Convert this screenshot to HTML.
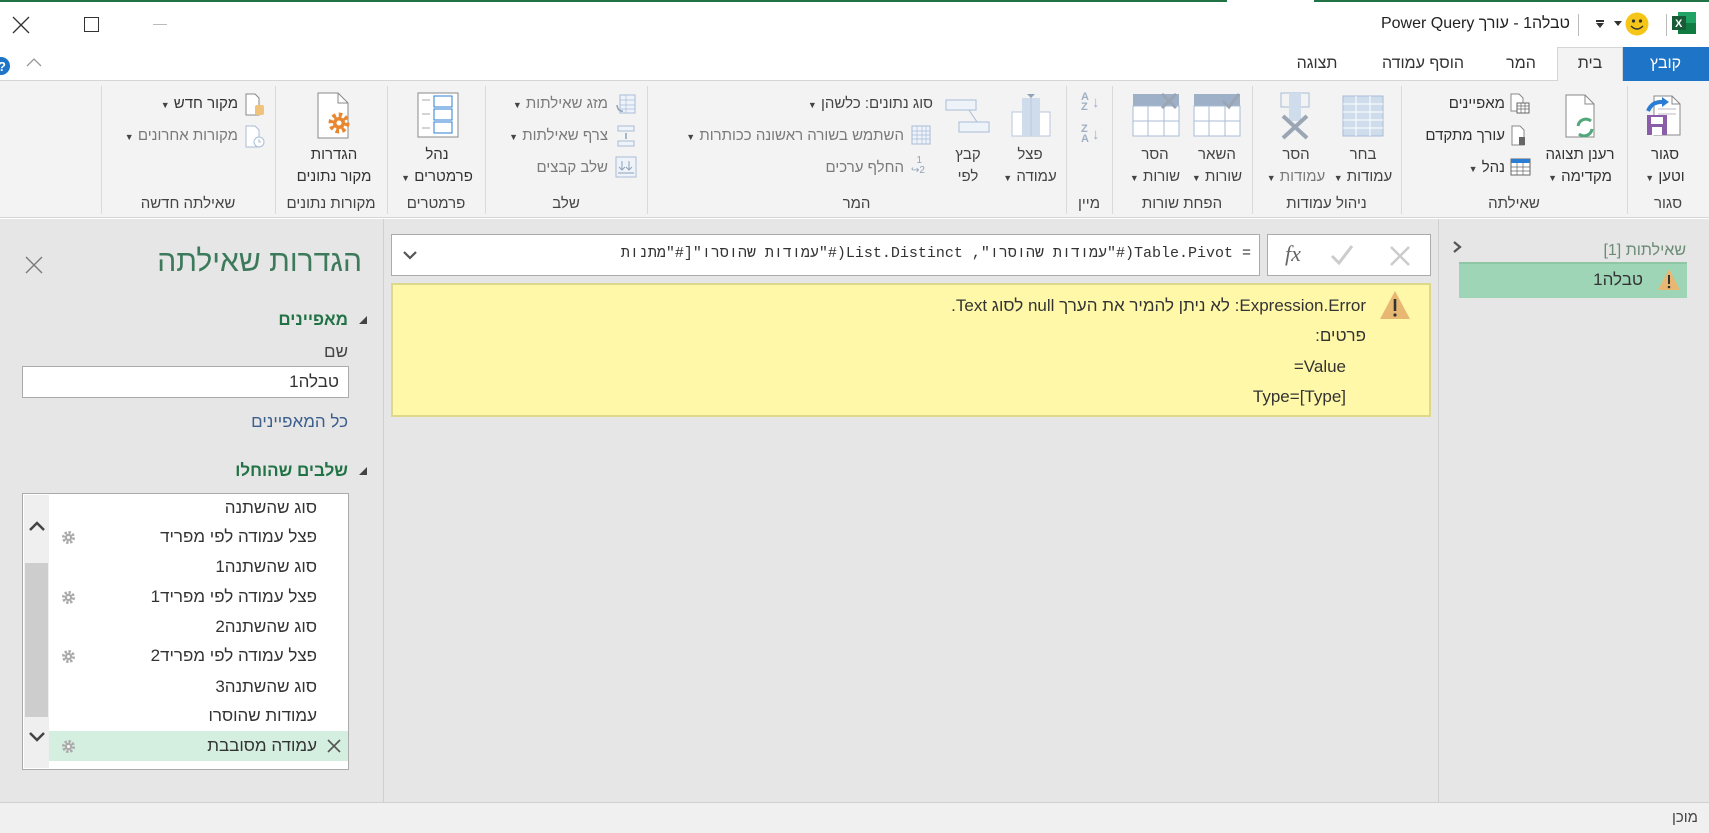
<!DOCTYPE html>
<html><head><meta charset="utf-8">
<style>
*{margin:0;padding:0;box-sizing:border-box}
body{width:1709px;height:833px;position:relative;overflow:hidden;background:#fff;font-family:"Liberation Sans","DejaVu Sans",sans-serif;color:#444;font-size:15px}
.a{position:absolute}
.t{position:absolute;white-space:nowrap;line-height:20px;direction:rtl}
.c{position:absolute;white-space:nowrap;line-height:20px;text-align:center;direction:rtl}
.g{color:#7a7a7a}
.sep{position:absolute;top:86px;width:1px;height:128px;background:#dadada}
.tri{font-size:9px;color:#444}
</style></head><body>
<!-- title bar -->
<div class="a" style="left:0;top:0;width:1227px;height:2px;background:#217346"></div>
<div class="a" style="left:1314px;top:0;width:395px;height:2px;background:#217346"></div>
<svg class="a" style="left:12px;top:16px" width="18" height="18"><path d="M1 1L17 17M17 1L1 17" stroke="#333" stroke-width="1.3"/></svg>
<div class="a" style="left:84px;top:17px;width:15px;height:15px;border:1.3px solid #333"></div>
<div class="a" style="left:153px;top:24px;width:14px;height:1px;background:#bbb"></div>
<div class="t" style="right:139px;top:14px;font-size:16px;color:#222">טבלה1 - עורך Power Query</div>
<div class="a" style="left:1578px;top:14px;width:1px;height:22px;background:#bbb"></div>
<div class="a" style="left:1596px;top:20px;width:8px;height:1.5px;background:#333"></div>
<svg class="a" style="left:1596px;top:23px" width="9" height="6"><path d="M0 0H8L4 5Z" fill="#333"/></svg>
<svg class="a" style="left:1614px;top:21px" width="9" height="6"><path d="M0 0H8L4 5Z" fill="#333"/></svg>
<svg class="a" style="left:1625px;top:12px" width="24" height="24"><circle cx="12" cy="12" r="11.5" fill="#f5c518"/><circle cx="8.5" cy="9" r="1.6" fill="#333"/><circle cx="15.5" cy="9" r="1.6" fill="#333"/><path d="M6 14Q12 20 18 14" stroke="#333" stroke-width="1.4" fill="none"/></svg>
<div class="a" style="left:1666px;top:14px;width:1px;height:22px;background:#bbb"></div>
<svg class="a" style="left:1672px;top:12px" width="24" height="22"><rect x="6" y="0" width="18" height="22" fill="#21a366"/><rect x="6" y="11" width="18" height="11" fill="#107c41"/><rect x="0" y="4" width="14" height="14" fill="#185c37"/><text x="3" y="15" font-size="11" font-weight="bold" fill="#fff" font-family="Liberation Sans">X</text></svg>
<!-- tabs -->
<div class="a" style="left:0;top:80px;width:1709px;height:1px;background:#d5d5d5"></div>
<div class="a" style="left:1622px;top:47px;width:87px;height:34px;background:#1e74c6"></div>
<div class="c" style="left:1622px;width:87px;top:54px;font-size:16px;color:#fff">קובץ</div>
<div class="a" style="left:1557px;top:47px;width:66px;height:34px;background:#f3f3f3;border:1px solid #d5d5d5;border-bottom:none"></div>
<div class="c" style="left:1557px;width:66px;top:54px;font-size:16px;color:#333">בית</div>
<div class="c" style="left:1491px;width:60px;top:54px;font-size:16px;color:#333">המר</div>
<div class="c" style="left:1373px;width:100px;top:54px;font-size:16px;color:#333">הוסף עמודה</div>
<div class="c" style="left:1277px;width:80px;top:54px;font-size:16px;color:#333">תצוגה</div>
<svg class="a" style="left:-9px;top:56px" width="20" height="20"><circle cx="10" cy="10" r="9" fill="#1e74c6"/><text x="7" y="15" font-size="13" fill="#fff" font-weight="bold" font-family="Liberation Sans">?</text></svg>
<svg class="a" style="left:26px;top:58px" width="16" height="10"><path d="M1 8L8 1L15 8" stroke="#999" stroke-width="1.3" fill="none"/></svg>
<!-- ribbon -->
<div class="a" style="left:0;top:81px;width:1709px;height:137px;background:#f3f3f3;border-bottom:1px solid #d5d5d5"></div>
<div class="sep" style="left:101px"></div><div class="sep" style="left:275px"></div><div class="sep" style="left:387px"></div><div class="sep" style="left:485px"></div><div class="sep" style="left:647px"></div><div class="sep" style="left:1066px"></div><div class="sep" style="left:1112px"></div><div class="sep" style="left:1252px"></div><div class="sep" style="left:1401px"></div><div class="sep" style="left:1627px"></div>
<!-- group labels -->
<div class="c" style="left:1627px;width:82px;top:194px">סגור</div>
<div class="c" style="left:1401px;width:226px;top:194px">שאילתה</div>
<div class="c" style="left:1252px;width:149px;top:194px">ניהול עמודות</div>
<div class="c" style="left:1112px;width:140px;top:194px">הפחת שורות</div>
<div class="c" style="left:1066px;width:46px;top:194px">מיין</div>
<div class="c" style="left:647px;width:419px;top:194px">המר</div>
<div class="c" style="left:485px;width:162px;top:194px">שלב</div>
<div class="c" style="left:387px;width:98px;top:194px">פרמטרים</div>
<div class="c" style="left:275px;width:112px;top:194px">מקורות נתונים</div>
<div class="c" style="left:101px;width:174px;top:194px">שאילתה חדשה</div>
<!-- סגור וטען -->
<svg class="a" style="left:1642px;top:93px" width="42" height="46"><path d="M12 3H30L38 11V42H12Z" fill="#fff" stroke="#888"/><path d="M30 3V11H38" fill="none" stroke="#888"/><path d="M16 16H34M16 21H34" stroke="#bbb"/><rect x="5" y="22" width="20" height="20" fill="#8b5ca8"/><rect x="9" y="24" width="12" height="7" fill="#fff"/><rect x="10" y="34" width="10" height="8" fill="#fff"/><path d="M6 18Q10 8 22 9" stroke="#2b7cd3" stroke-width="4" fill="none"/><path d="M20 4L27 9L20 14Z" fill="#2b7cd3"/></svg>
<div class="c" style="left:1630px;width:70px;top:145px;color:#333">סגור</div>
<div class="c" style="left:1630px;width:70px;top:167px;color:#333">וטען <span class="tri">▼</span></div>
<!-- רענן -->
<svg class="a" style="left:1560px;top:93px" width="40" height="46"><path d="M6 2H25L34 11V44H6Z" fill="#fff" stroke="#888"/><path d="M25 2V11H34" fill="none" stroke="#888"/><path d="M18 33A8 8 0 0 1 31 28M32 36A8 8 0 0 1 19 41" stroke="#52a77a" stroke-width="3" fill="none"/></svg>
<div class="c" style="left:1535px;width:90px;top:145px;color:#333">רענן תצוגה</div>
<div class="c" style="left:1535px;width:90px;top:167px;color:#333">מקדימה <span class="tri">▼</span></div>
<!-- small שאילתה -->
<svg class="a" style="left:1509px;top:93px" width="22" height="22"><path d="M2 1H10L14 5V18H2Z" fill="#fff" stroke="#888"/><rect x="8" y="10" width="12" height="10" fill="#fff" stroke="#666"/><path d="M8 13H20M8 16H20M12 10V20M16 10V20" stroke="#666" stroke-width=".7"/></svg>
<div class="t" style="right:204px;top:94px;color:#333">מאפיינים</div>
<svg class="a" style="left:1509px;top:125px" width="22" height="22"><path d="M3 1H11L15 5V20H3Z" fill="#fff" stroke="#888"/><rect x="10" y="12" width="6" height="8" fill="#666"/></svg>
<div class="t" style="right:204px;top:126px;color:#333">עורך מתקדם</div>
<svg class="a" style="left:1510px;top:157px" width="22" height="20"><rect x="1" y="2" width="19" height="16" fill="#fff" stroke="#666"/><rect x="1" y="2" width="19" height="4" fill="#2b7cd3"/><path d="M1 10H20M1 14H20M7 6V18M13 6V18" stroke="#666" stroke-width=".7"/></svg>
<div class="t" style="right:204px;top:158px;color:#333">נהל <span class="tri">▼</span></div>
<!-- ניהול עמודות -->
<svg class="a" style="left:1342px;top:95px" width="42" height="42"><rect x="1" y="1" width="40" height="40" fill="#cfdcec" stroke="#a9bcd6"/><path d="M1 9H41M1 17H41M1 25H41M1 33H41M14 1V41M28 1V41" stroke="#fff"/></svg>
<div class="c" style="left:1323px;width:80px;top:145px">בחר</div>
<div class="c" style="left:1323px;width:80px;top:167px">עמודות <span class="tri">▼</span></div>
<svg class="a" style="left:1275px;top:92px" width="40" height="48"><rect x="6" y="1" width="28" height="14" fill="none" stroke="#a9bcd6"/><rect x="14" y="1" width="12" height="28" fill="#cfdcec"/><path d="M8 24L32 46M32 24L8 46" stroke="#9aa6b4" stroke-width="4"/></svg>
<div class="c" style="left:1256px;width:80px;top:145px" >הסר</div>
<div class="c g" style="left:1256px;width:80px;top:167px">עמודות <span class="tri">▼</span></div>
<!-- הפחת שורות -->
<svg class="a" style="left:1193px;top:93px" width="48" height="44"><rect x="1" y="1" width="46" height="12" fill="#9eb0c8"/><rect x="1" y="13" width="46" height="30" fill="#fff" stroke="#a9bcd6"/><path d="M1 28H47M16 13V43M32 13V43" stroke="#a9bcd6"/><path d="M30 8L36 14L46 1" stroke="#9aa6b4" stroke-width="3" fill="none"/></svg>
<div class="c" style="left:1180px;width:74px;top:145px">השאר</div>
<div class="c" style="left:1180px;width:74px;top:167px">שורות <span class="tri">▼</span></div>
<svg class="a" style="left:1132px;top:93px" width="48" height="44"><rect x="1" y="1" width="46" height="12" fill="#9eb0c8"/><rect x="1" y="13" width="46" height="30" fill="#fff" stroke="#a9bcd6"/><path d="M1 28H47M16 13V43M32 13V43" stroke="#a9bcd6"/><path d="M30 1L44 15M44 1L30 15" stroke="#9aa6b4" stroke-width="3"/></svg>
<div class="c" style="left:1118px;width:74px;top:145px">הסר</div>
<div class="c" style="left:1118px;width:74px;top:167px">שורות <span class="tri">▼</span></div>
<!-- מיין -->
<div class="a" style="left:1081px;top:92px;font-size:11px;line-height:10px;color:#9fb0c4;font-weight:bold">A<br>Z</div><div class="a" style="left:1092px;top:94px;color:#9fb0c4">↓</div>
<div class="a" style="left:1081px;top:124px;font-size:11px;line-height:10px;color:#9fb0c4;font-weight:bold">Z<br>A</div><div class="a" style="left:1092px;top:126px;color:#9fb0c4">↓</div>
<!-- פצל / קבץ -->
<svg class="a" style="left:1010px;top:92px" width="42" height="46"><rect x="2" y="20" width="38" height="24" fill="#fff" stroke="#b8c7da"/><rect x="12" y="6" width="18" height="38" fill="#cfdcec"/><path d="M21 2V44" stroke="#b8c7da"/><path d="M17 2H25L21 6Z" fill="#8fa2b8"/></svg>
<div class="c" style="left:990px;width:80px;top:145px">פצל</div>
<div class="c" style="left:990px;width:80px;top:167px">עמודה <span class="tri">▼</span></div>
<svg class="a" style="left:945px;top:98px" width="46" height="36"><rect x="1" y="2" width="30" height="10" fill="#eef3fa" stroke="#a9bcd6"/><rect x="14" y="24" width="30" height="10" fill="#eef3fa" stroke="#a9bcd6"/><path d="M24 12L32 24" stroke="#a9bcd6"/></svg>
<div class="c" style="left:938px;width:60px;top:145px">קבץ</div>
<div class="c" style="left:938px;width:60px;top:167px">לפי</div>
<!-- המר small -->
<div class="t" style="right:776px;top:94px">סוג נתונים: כלשהן <span class="tri">▼</span></div>
<svg class="a" style="left:911px;top:125px" width="20" height="20"><rect x="1" y="1" width="18" height="18" fill="#eef3fa" stroke="#a9bcd6"/><path d="M1 6H19M1 10H19M1 14H19M6 1V19M11 1V19M15 1V19" stroke="#a9bcd6" stroke-width=".7"/></svg>
<div class="t g" style="right:805px;top:126px">השתמש בשורה ראשונה ככותרות <span class="tri">▼</span></div>
<div class="a" style="left:911px;top:156px;font-size:10px;color:#8fa2b8;line-height:10px">&nbsp;&nbsp;1<br>↪2</div>
<div class="t g" style="right:805px;top:158px">החלף ערכים</div>
<!-- שלב -->
<svg class="a" style="left:615px;top:93px" width="22" height="22"><rect x="5" y="2" width="15" height="18" fill="#eef3fa" stroke="#a9bcd6"/><path d="M5 7H20M5 12H20M5 16H20M11 2V20" stroke="#a9bcd6" stroke-width=".7"/><path d="M2 12Q3 19 8 18" stroke="#8fa2b8" stroke-width="1.5" fill="none"/></svg>
<div class="t g" style="right:1101px;top:94px">מזג שאילתות <span class="tri">▼</span></div>
<svg class="a" style="left:615px;top:125px" width="22" height="22"><rect x="3" y="1" width="16" height="5" fill="#eef3fa" stroke="#a9bcd6"/><rect x="3" y="16" width="16" height="5" fill="#eef3fa" stroke="#a9bcd6"/><path d="M11 8V14" stroke="#8fa2b8" stroke-width="1.5"/></svg>
<div class="t g" style="right:1101px;top:126px">צרף שאילתות <span class="tri">▼</span></div>
<svg class="a" style="left:615px;top:156px" width="22" height="22"><rect x="1" y="1" width="20" height="20" fill="#eef3fa" stroke="#a9bcd6"/><path d="M7 5V14M4 11L7 14L10 11M14 5V14M11 11L14 14L17 11M3 17H19" stroke="#8fa2b8" fill="none"/></svg>
<div class="t g" style="right:1101px;top:158px">שלב קבצים</div>
<!-- פרמטרים -->
<svg class="a" style="left:417px;top:92px" width="42" height="46"><rect x="1" y="1" width="40" height="44" fill="#fff" stroke="#888"/><path d="M5 8H13M5 22H13M5 36H13" stroke="#aaa"/><rect x="17" y="4" width="18" height="11" fill="#fff" stroke="#2b7cd3"/><rect x="17" y="17" width="18" height="11" fill="#fff" stroke="#2b7cd3"/><rect x="17" y="30" width="18" height="11" fill="#fff" stroke="#2b7cd3"/></svg>
<div class="c" style="left:395px;width:84px;top:145px;color:#333">נהל</div>
<div class="c" style="left:395px;width:84px;top:167px;color:#333">פרמטרים <span class="tri">▼</span></div>
<!-- הגדרות מקור -->
<svg class="a" style="left:316px;top:92px" width="40" height="48"><path d="M2 1H22L32 11V46H2Z" fill="#fff" stroke="#888"/><path d="M22 1V11H32" fill="none" stroke="#888"/><circle cx="23" cy="31" r="8" fill="none" stroke="#e8872f" stroke-width="5" stroke-dasharray="3.3 2.9"/><circle cx="23" cy="31" r="6" fill="#e8872f"/><circle cx="23" cy="31" r="2.5" fill="#fff"/></svg>
<div class="c" style="left:280px;width:108px;top:145px;color:#333">הגדרות</div>
<div class="c" style="left:280px;width:108px;top:167px;color:#333">מקור נתונים</div>
<!-- שאילתה חדשה -->
<svg class="a" style="left:244px;top:93px" width="22" height="24"><path d="M2 1H11L15 5V22H2Z" fill="#fff" stroke="#888"/><rect x="11" y="12" width="9" height="10" rx="2" fill="#f0c27b"/></svg>
<div class="t" style="right:1471px;top:94px;color:#333">מקור חדש <span class="tri">▼</span></div>
<svg class="a" style="left:244px;top:125px" width="22" height="24"><path d="M2 1H11L15 5V22H2Z" fill="#fff" stroke="#a9bcd6"/><circle cx="15" cy="17" r="5" fill="#fff" stroke="#a9bcd6"/><path d="M15 14V17H17" stroke="#a9bcd6" fill="none"/></svg>
<div class="t g" style="right:1471px;top:126px">מקורות אחרונים <span class="tri">▼</span></div>
<!-- main areas -->
<div class="a" style="left:0;top:219px;width:1709px;height:583px;background:#e6e6e6"></div>
<div class="a" style="left:383px;top:219px;width:1px;height:583px;background:#cfcfcf"></div>
<div class="a" style="left:1438px;top:219px;width:1px;height:583px;background:#cfcfcf"></div>
<div class="a" style="left:0;top:802px;width:1709px;height:31px;background:#f0f0f0;border-top:1px solid #d0d0d0"></div>
<div class="t" style="right:11px;top:808px;color:#444">מוכן</div>
<!-- left panel -->
<div class="t" style="right:1347px;top:245px;font-size:30px;line-height:34px;color:#3d7a5c">הגדרות שאילתה</div>
<svg class="a" style="left:25px;top:256px" width="18" height="18"><path d="M1 1L17 17M17 1L1 17" stroke="#777" stroke-width="1.3"/></svg>
<svg class="a" style="left:359px;top:316px" width="9" height="9"><path d="M8 0V8H0Z" fill="#444"/></svg>
<div class="t" style="right:1361px;top:310px;font-weight:bold;font-size:17px;color:#217346">מאפיינים</div>
<div class="t" style="right:1361px;top:342px;font-size:17px;color:#444">שם</div>
<div class="a" style="left:22px;top:366px;width:327px;height:32px;background:#fff;border:1.5px solid #ababab"></div>
<div class="t" style="right:1370px;top:372px;font-size:17px;color:#333">טבלה1</div>
<div class="t" style="right:1361px;top:412px;font-size:17px;color:#3b5e8c">כל המאפיינים</div>
<svg class="a" style="left:359px;top:467px" width="9" height="9"><path d="M8 0V8H0Z" fill="#444"/></svg>
<div class="t" style="right:1361px;top:461px;font-weight:bold;font-size:17px;color:#217346">שלבים שהוחלו</div>
<div class="a" style="left:22px;top:493px;width:327px;height:277px;background:#fff;border:1.5px solid #ababab"></div>
<div class="a" style="left:24px;top:495px;width:25px;height:273px;background:#efefef"></div>
<div class="a" style="left:25px;top:563px;width:23px;height:154px;background:#cdcdcd"></div>
<svg class="a" style="left:28px;top:520px" width="18" height="12"><path d="M2 10L9 3L16 10" stroke="#444" stroke-width="2.5" fill="none"/></svg>
<svg class="a" style="left:28px;top:731px" width="18" height="12"><path d="M2 2L9 9L16 2" stroke="#444" stroke-width="2.5" fill="none"/></svg>
<div class="a" style="left:49px;top:731px;width:299px;height:30px;background:#d4eee0"></div>
<div class="t" style="right:1392px;top:498px;font-size:17px;color:#333">סוג שהשתנה</div>
<div class="t" style="right:1392px;top:527px;font-size:17px;color:#333">פצל עמודה לפי מפריד</div>
<div class="t" style="right:1392px;top:557px;font-size:17px;color:#333">סוג שהשתנה1</div>
<div class="t" style="right:1392px;top:587px;font-size:17px;color:#333">פצל עמודה לפי מפריד1</div>
<div class="t" style="right:1392px;top:617px;font-size:17px;color:#333">סוג שהשתנה2</div>
<div class="t" style="right:1392px;top:646px;font-size:17px;color:#333">פצל עמודה לפי מפריד2</div>
<div class="t" style="right:1392px;top:677px;font-size:17px;color:#333">סוג שהשתנה3</div>
<div class="t" style="right:1392px;top:706px;font-size:17px;color:#333">עמודות שהוסרו</div>
<div class="t" style="right:1392px;top:736px;font-size:17px;color:#333">עמודה מסובבת</div>
<svg class="a" style="left:327px;top:739px" width="14" height="14"><path d="M1 1L13 13M13 1L1 13" stroke="#555" stroke-width="1.6"/></svg>
<svg class="a" style="left:61px;top:530px" width="15" height="15"><circle cx="7.5" cy="7.5" r="5" fill="none" stroke="#aaa" stroke-width="3" stroke-dasharray="2.3 1.6"/><circle cx="7.5" cy="7.5" r="3.6" fill="#aaa"/><circle cx="7.5" cy="7.5" r="1.5" fill="#fff"/></svg>
<svg class="a" style="left:61px;top:590px" width="15" height="15"><circle cx="7.5" cy="7.5" r="5" fill="none" stroke="#aaa" stroke-width="3" stroke-dasharray="2.3 1.6"/><circle cx="7.5" cy="7.5" r="3.6" fill="#aaa"/><circle cx="7.5" cy="7.5" r="1.5" fill="#fff"/></svg>
<svg class="a" style="left:61px;top:649px" width="15" height="15"><circle cx="7.5" cy="7.5" r="5" fill="none" stroke="#aaa" stroke-width="3" stroke-dasharray="2.3 1.6"/><circle cx="7.5" cy="7.5" r="3.6" fill="#aaa"/><circle cx="7.5" cy="7.5" r="1.5" fill="#fff"/></svg>
<svg class="a" style="left:61px;top:739px" width="15" height="15"><circle cx="7.5" cy="7.5" r="5" fill="none" stroke="#aaa" stroke-width="3" stroke-dasharray="2.3 1.6"/><circle cx="7.5" cy="7.5" r="3.6" fill="#aaa"/><circle cx="7.5" cy="7.5" r="1.5" fill="#fff"/></svg>
<!-- formula bar -->
<div class="a" style="left:391px;top:234px;width:869px;height:42px;background:#fff;border:1.5px solid #ababab"></div>
<svg class="a" style="left:402px;top:250px" width="16" height="10"><path d="M2 2L8 8L14 2" stroke="#555" stroke-width="2.2" fill="none"/></svg>
<div class="t" style="right:458px;top:244px;font-family:'Liberation Mono',monospace;font-size:15px;color:#333">= Table.Pivot(#"עמודות שהוסרו", List.Distinct(#"עמודות שהוסרו"[#"מתנות</div>
<div class="a" style="left:1267px;top:234px;width:164px;height:42px;background:#fff;border:1.5px solid #ababab"></div>
<div class="a" style="left:1285px;top:241px;font-family:'Liberation Serif',serif;font-style:italic;font-size:22px;color:#666">fx</div>
<svg class="a" style="left:1330px;top:244px" width="24" height="22"><path d="M2 12L9 19L22 2" stroke="#ccc" stroke-width="3" fill="none"/></svg>
<svg class="a" style="left:1389px;top:245px" width="22" height="22"><path d="M2 2L20 20M20 2L2 20" stroke="#ccc" stroke-width="2.5"/></svg>
<!-- error box -->
<div class="a" style="left:391px;top:283px;width:1040px;height:134px;background:#fff8a8;border:2px solid #ddd98c"></div>
<svg class="a" style="left:1379px;top:290px" width="32" height="30"><path d="M16 1L31 29H1Z" fill="#e8b873"/><path d="M16 9V21" stroke="#333" stroke-width="2.6"/><circle cx="16" cy="25" r="1.6" fill="#333"/></svg>
<div class="t" style="right:343px;top:296px;font-size:17px;color:#333">Expression.Error: לא ניתן להמיר את הערך null לסוג Text.</div>
<div class="t" style="right:343px;top:326px;font-size:17px;color:#333">פרטים:</div>
<div class="t" style="right:363px;top:357px;font-size:17px;color:#333">Value=</div>
<div class="t" style="right:363px;top:387px;font-size:17px;color:#333;direction:ltr">Type=[Type]</div>
<!-- right panel -->
<svg class="a" style="left:1452px;top:240px" width="10" height="14"><path d="M2 2L8 7L2 12" stroke="#555" stroke-width="2.2" fill="none"/></svg>
<div class="t" style="right:23px;top:241px;font-size:16px;color:#6b8b76">שאילתות [1]</div>
<div class="a" style="left:1459px;top:262px;width:228px;height:36px;background:#9fd5b7;border-top:2px solid #8fc6a6"></div>
<svg class="a" style="left:1657px;top:268px" width="24" height="23"><path d="M12 1L23 22H1Z" fill="#e8b873"/><path d="M12 7V16" stroke="#333" stroke-width="2"/><circle cx="12" cy="19" r="1.3" fill="#333"/></svg>
<div class="t" style="right:66px;top:270px;font-size:17px;color:#333">טבלה1</div>
</body></html>
